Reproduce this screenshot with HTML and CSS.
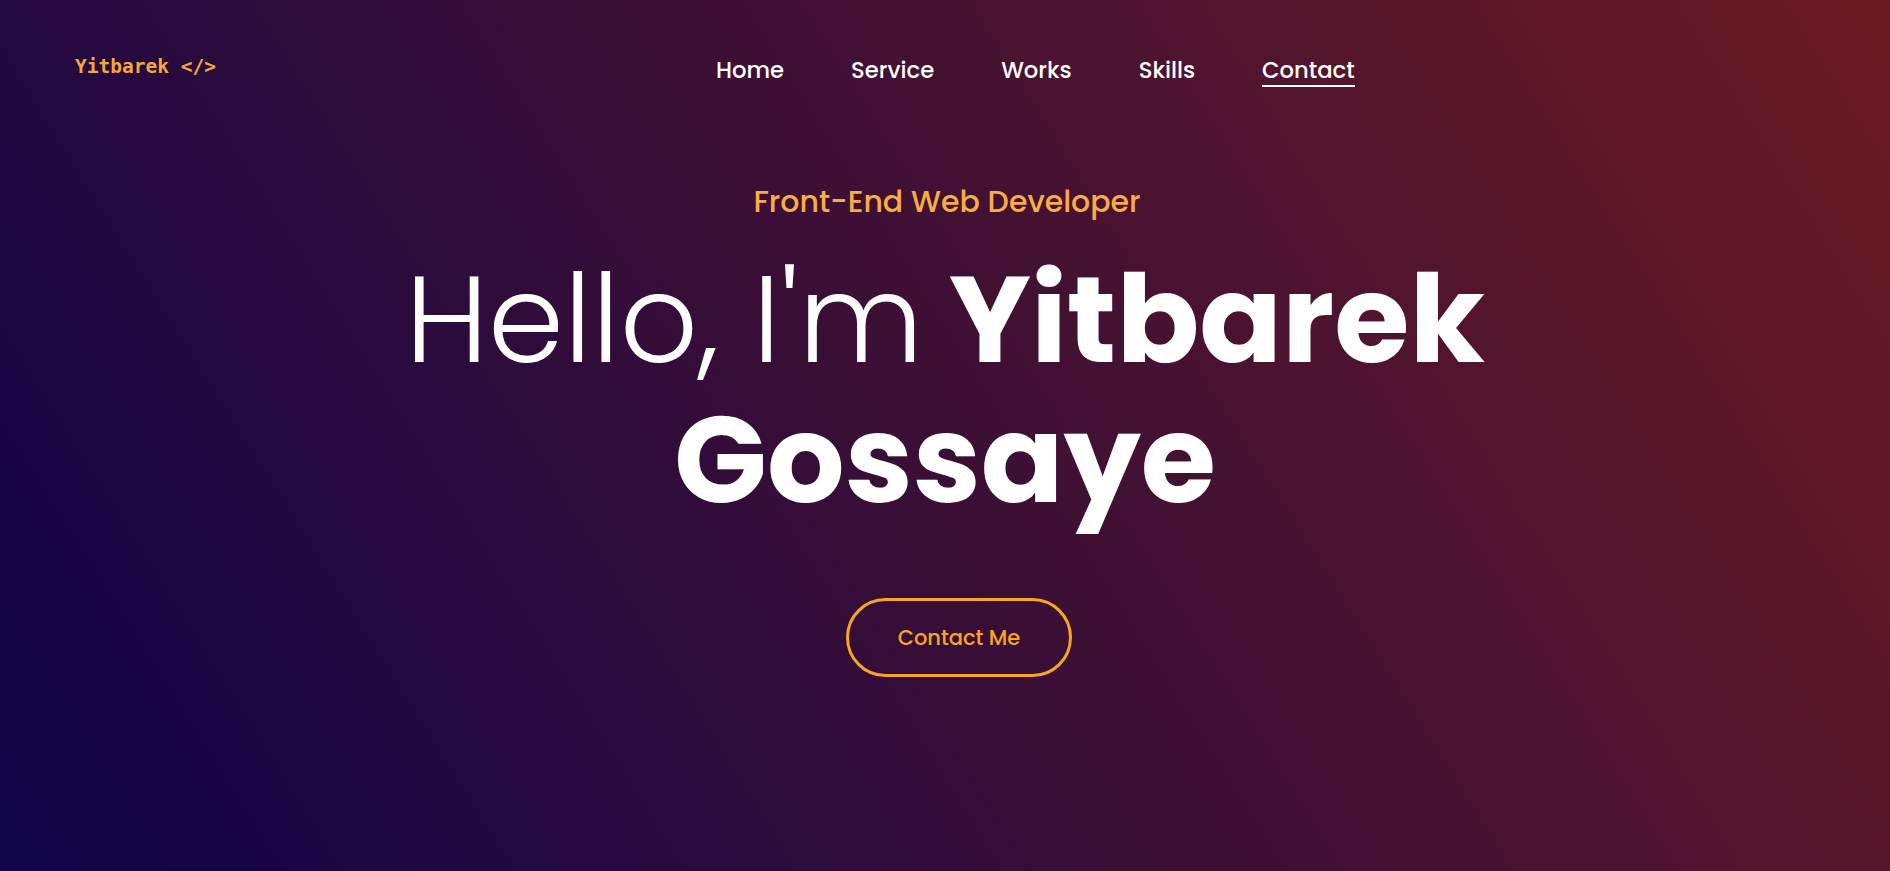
FILE: index.html
```html
<!DOCTYPE html>
<html lang="en">
<head>
<meta charset="utf-8">
<title>Yitbarek Gossaye</title>
<link rel="stylesheet" href="styles.css">
</head>
<body>
<div class="page">
  <header class="header">
    <a class="logo" href="#">Yitbarek &lt;/&gt;</a>
    <nav class="nav">
      <a href="#">Home</a>
      <a href="#">Service</a>
      <a href="#">Works</a>
      <a href="#">Skills</a>
      <a href="#" class="active">Contact</a>
    </nav>
  </header>
  <main class="hero">
    <p class="role">Front-End Web Developer</p>
    <h1 class="title"><span class="thin">Hello, I'm</span> Yitbarek<br>Gossaye</h1>
    <a class="btn" href="#">Contact Me</a>
  </main>
</div>
</body>
</html>
```

FILE: styles.css
```css
* { box-sizing: border-box; }
html, body { margin: 0; padding: 0; }
body {
  font-family: "Poppins", Inter, "Open Sans", sans-serif;
  color: #fff;
}
.page {
  min-height: 871px;
  height: 871px;
  background: linear-gradient(58deg, #0e0448 0%, #3c0f35 50%, #6b1b23 100%);
  display: flex;
  flex-direction: column;
}
a { text-decoration: none; color: inherit; }
.header {
  display: flex;
  align-items: flex-start;
  padding: 55px 75px 0 75px;
  height: 88px;
}
.logo {
  width: 641px;
  font-family: "DejaVu Sans Mono", "Liberation Mono", monospace;
  font-weight: 700;
  font-size: 19.5px;
  line-height: 24px;
  color: #f4a83b;
}
.nav {
  display: flex;
  gap: 67px;
  margin-top: 1px;
  font-size: 22.7px;
  font-weight: 500;
}
.nav a {
  line-height: 28px;
  padding-bottom: 1px;
  border-bottom: 2px solid transparent;
}
.nav a.active { border-bottom-color: #fff; }
.hero {
  display: flex;
  flex-direction: column;
  align-items: center;
  text-align: center;
}
.role {
  margin: 96px 0 0 4px;
  font-size: 30px;
  font-weight: 500;
  color: #f7ad42;
  line-height: 36px;
}
.title {
  margin: 30px 0 0;
  font-size: 122px;
  line-height: 140px;
  font-weight: 700;
}
.thin { font-weight: 300; }
.btn {
  margin-top: 68px;
  margin-left: 28px;
  width: 226px;
  height: 79px;
  border: 3px solid #f8a51f;
  border-radius: 40px;
  color: #f8a51f;
  font-size: 21px;
  font-weight: 500;
  display: flex;
  align-items: center;
  justify-content: center;
}
```
